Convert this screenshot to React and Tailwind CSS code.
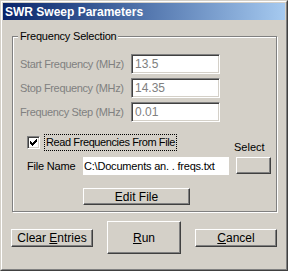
import React from "react";

const font = { fontFamily: '"Liberation Sans", Arial, sans-serif' };

function Raised({ className = "", children }) {
  return (
    <div
      className={
        "flex items-center justify-center whitespace-nowrap border border-t-white border-l-white border-r-[#404040] border-b-[#404040] shadow-[inset_-1px_-1px_0_#808080] text-black " +
        className
      }
    >
      {children}
    </div>
  );
}

function FreqRow({ label, value }) {
  return (
    <div className="flex items-center">
      <span className="w-[111px] whitespace-nowrap text-[11px] tracking-[-0.35px] text-[#808080] leading-[13px]">
        {label}
      </span>
      <div className="w-[89px] h-[20px] bg-white border border-t-[#808080] border-l-[#808080] border-r-white border-b-white shadow-[inset_1px_1px_0_#404040,inset_-1px_-1px_0_#d4d0c8] flex items-center pl-[3px] text-[12px] text-[#808080]">
        {value}
      </div>
    </div>
  );
}

function Check() {
  const px = [
    [6, 0], [5, 1], [6, 1], [0, 2], [4, 2], [5, 2], [6, 2],
    [0, 3], [1, 3], [3, 3], [4, 3], [5, 3],
    [0, 4], [1, 4], [2, 4], [3, 4], [4, 4],
    [1, 5], [2, 5], [3, 5], [2, 6],
  ];
  return (
    <svg width="7" height="7" viewBox="0 0 7 7" shapeRendering="crispEdges">
      {px.map(([x, y]) => (
        <rect key={x + "-" + y} x={x} y={y} width="1" height="1" fill="#000" />
      ))}
    </svg>
  );
}

export default function App() {
  return (
    <div style={font} className="w-[288px] h-[271px] bg-[#d4d0c8] flex flex-col border border-t-[#d4d0c8] border-l-[#d4d0c8] border-r-[#404040] border-b-[#404040]">
      <div className="flex-1 flex flex-col border border-t-white border-l-white border-r-[#808080] border-b-[#808080] p-px">
        <div className="h-[17px] flex items-center pl-[2px] bg-gradient-to-r from-[#0a246a] to-[#a6caf0]">
          <span className="text-white font-bold text-[12px] leading-[14px]">SWR Sweep Parameters</span>
        </div>

        <div className="relative mt-[16px] ml-[9px] mr-[8px] border border-[#808080] shadow-[1px_1px_0_#fff,inset_1px_1px_0_#fff] pt-[17px] pb-[6px]">
          <span className="absolute left-[5px] -top-[7px] px-[2px] bg-[#d4d0c8] text-[11px] tracking-[-0.2px] leading-[13px] text-black">
            Frequency Selection
          </span>

          <div className="flex flex-col gap-[4px] pl-[7px]">
            <FreqRow label="Start Frequency (MHz)" value="13.5" />
            <FreqRow label="Stop Frequency (MHz)" value="14.35" />
            <FreqRow label="Frequency Step (MHz)" value="0.01" />
          </div>

          <div className="flex items-end mt-[12px]">
            <div className="flex flex-col pl-[14px]">
              <div className="flex items-center h-[17px]">
                <div className="w-[13px] h-[13px] bg-white border border-t-[#808080] border-l-[#808080] border-r-white border-b-white shadow-[inset_1px_1px_0_#404040,inset_-1px_-1px_0_#d4d0c8] flex items-center justify-center">
                  <Check />
                </div>
                <span className="ml-[4px] px-[1px] whitespace-nowrap border border-dotted border-black text-[11px] tracking-[-0.4px] leading-[15px] text-black">
                  Read Frequencies From File
                </span>
              </div>
              <div className="flex items-center mt-[6px]">
                <span className="w-[56px] whitespace-nowrap text-[11px] tracking-[-0.2px] text-black">File Name</span>
                <div className="w-[146px] h-[18px] bg-white flex items-center pl-[1px] whitespace-nowrap text-[11px] tracking-[-0.2px] text-black">
                  C:\Documents an. . freqs.txt
                </div>
              </div>
            </div>
            <div className="flex flex-col ml-[7px] mb-[1px]">
              <span className="-ml-[2px] text-[11px] leading-[13px] text-black">Select</span>
              <Raised className="mt-[3px] w-[35px] h-[17px]" />
            </div>
          </div>

          <div className="pl-[70px] mt-[13px]">
            <Raised className="w-[107px] h-[17px] text-[12px]">Edit File</Raised>
          </div>
        </div>

        <div className="flex items-center mt-[9px] ml-[8px] gap-[14px]">
          <Raised className="w-[82px] h-[18px] text-[12px]">
            Clear&nbsp;<span className="underline">E</span>ntries
          </Raised>
          <Raised className="w-[74px] h-[33px] text-[12px]">
            <span className="underline">R</span>un
          </Raised>
          <Raised className="w-[82px] h-[18px] text-[12px]">
            <span className="underline">C</span>ancel
          </Raised>
        </div>
      </div>
    </div>
  );
}
